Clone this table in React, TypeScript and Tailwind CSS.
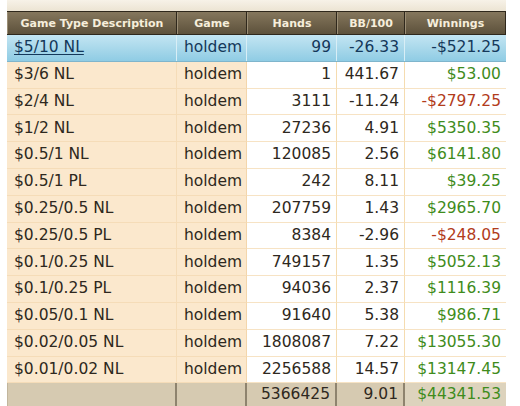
import React from "react";

type Row = { d: string; h: string; bb: string; w: string };

const rows: Row[] = [
  { d: "$3/6 NL", h: "1", bb: "441.67", w: "$53.00" },
  { d: "$2/4 NL", h: "3111", bb: "-11.24", w: "-$2797.25" },
  { d: "$1/2 NL", h: "27236", bb: "4.91", w: "$5350.35" },
  { d: "$0.5/1 NL", h: "120085", bb: "2.56", w: "$6141.80" },
  { d: "$0.5/1 PL", h: "242", bb: "8.11", w: "$39.25" },
  { d: "$0.25/0.5 NL", h: "207759", bb: "1.43", w: "$2965.70" },
  { d: "$0.25/0.5 PL", h: "8384", bb: "-2.96", w: "-$248.05" },
  { d: "$0.1/0.25 NL", h: "749157", bb: "1.35", w: "$5052.13" },
  { d: "$0.1/0.25 PL", h: "94036", bb: "2.37", w: "$1116.39" },
  { d: "$0.05/0.1 NL", h: "91640", bb: "5.38", w: "$986.71" },
  { d: "$0.02/0.05 NL", h: "1808087", bb: "7.22", w: "$13055.30" },
  { d: "$0.01/0.02 NL", h: "2256588", bb: "14.57", w: "$13147.45" },
];

const cols = "grid grid-cols-[170px_70px_90px_68px_101px]";

function Head({ children }: { children: React.ReactNode }) {
  return (
    <div className="flex items-center justify-center h-full bg-gradient-to-b from-[#85775d] to-[#5d513b] border-r border-r-[#2f281c] border-l border-l-[#9b8e75] text-[#f6eedb] font-bold text-[11px] leading-none">
      {children}
    </div>
  );
}

export default function App() {
  return (
    <div className="w-[520px] h-[406px] bg-white overflow-hidden" style={{ fontFamily: '"DejaVu Sans", Verdana, sans-serif' }}>
      <div className="h-[11px] ml-[7px] w-[499px] bg-gradient-to-b from-[#f7f2e8] to-[#ece4d3]" />
      <div className="ml-[7px] w-[499px]">
        <div className={`${cols} h-[24px] border-t border-t-[#2f281c] border-b border-b-[#2f281c]`}>
          <Head>Game Type Description</Head>
          <Head>Game</Head>
          <Head>Hands</Head>
          <Head>BB/100</Head>
          <Head>Winnings</Head>
        </div>
        <div className={`${cols} h-[26.8px] leading-none text-[15.5px] text-[#14385a] bg-gradient-to-b from-[#c3e5f2] to-[#8fcce4] border-b border-b-[#7fb5cc]`}>
          <div className="pl-[7px] flex items-center underline underline-offset-2 border-r border-r-[#d8eef6]">$5/10 NL</div>
          <div className="pl-[7px] flex items-center border-r border-r-[#d8eef6]">holdem</div>
          <div className="pr-[5px] flex items-center justify-end border-r border-r-[#d8eef6]">99</div>
          <div className="pr-[5px] flex items-center justify-end border-r border-r-[#d8eef6]">-26.33</div>
          <div className="pr-[5px] flex items-center justify-end">-$521.25</div>
        </div>
        {rows.map((r) => {
          const neg = r.w.startsWith("-");
          return (
            <div key={r.d} className={`${cols} h-[26.8px] leading-none text-[15.5px] text-[#2e2820]`}>
              <div className="pl-[7px] flex items-center bg-[#fbe8cd] border-r border-r-[#f5dcb8] border-b border-b-[#f5dcb8]">{r.d}</div>
              <div className="pl-[7px] flex items-center bg-[#fbe8cd] border-r border-r-[#f3d6ac] border-b border-b-[#f5dcb8]">holdem</div>
              <div className="pr-[5px] flex items-center justify-end bg-white border-r border-r-[#f5dcb0] border-b border-b-[#f7e3c4]">{r.h}</div>
              <div className="pr-[5px] flex items-center justify-end bg-white border-r border-r-[#f5dcb0] border-b border-b-[#f7e3c4]">{r.bb}</div>
              <div className={`pr-[5px] flex items-center justify-end bg-white border-b border-b-[#f7e3c4] ${neg ? "text-[#b23c1c]" : "text-[#3f8c1c]"}`}>{r.w}</div>
            </div>
          );
        })}
        <div className={`${cols} h-[24px] leading-none text-[15.5px] text-[#2e2820] bg-[#d6cab1] border-b border-b-[#a89c84]`}>
          <div className="border-r-2 border-r-[#8e836e] border-l border-l-[#c2b69d]" />
          <div className="border-r-2 border-r-[#8e836e]" />
          <div className="pr-[5px] flex items-center justify-end border-r-2 border-r-[#8e836e]">5366425</div>
          <div className="pr-[5px] flex items-center justify-end border-r-2 border-r-[#8e836e]">9.01</div>
          <div className="pr-[5px] flex items-center justify-end bg-[#ddd3bd] text-[#3f8c1c]">$44341.53</div>
        </div>
      </div>
    </div>
  );
}
